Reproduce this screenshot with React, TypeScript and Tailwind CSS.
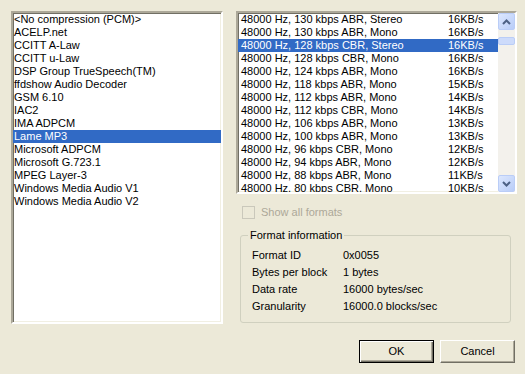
const codecs = [
  "<No compression (PCM)>",
  "ACELP.net",
  "CCITT A-Law",
  "CCITT u-Law",
  "DSP Group TrueSpeech(TM)",
  "ffdshow Audio Decoder",
  "GSM 6.10",
  "IAC2",
  "IMA ADPCM",
  "Lame MP3",
  "Microsoft ADPCM",
  "Microsoft G.723.1",
  "MPEG Layer-3",
  "Windows Media Audio V1",
  "Windows Media Audio V2",
];

const formats: [string, string][] = [
  ["48000 Hz, 130 kbps ABR, Stereo", "16KB/s"],
  ["48000 Hz, 130 kbps ABR, Mono", "16KB/s"],
  ["48000 Hz, 128 kbps CBR, Stereo", "16KB/s"],
  ["48000 Hz, 128 kbps CBR, Mono", "16KB/s"],
  ["48000 Hz, 124 kbps ABR, Mono", "16KB/s"],
  ["48000 Hz, 118 kbps ABR, Mono", "15KB/s"],
  ["48000 Hz, 112 kbps ABR, Mono", "14KB/s"],
  ["48000 Hz, 112 kbps CBR, Mono", "14KB/s"],
  ["48000 Hz, 106 kbps ABR, Mono", "13KB/s"],
  ["48000 Hz, 100 kbps ABR, Mono", "13KB/s"],
  ["48000 Hz, 96 kbps CBR, Mono", "12KB/s"],
  ["48000 Hz, 94 kbps ABR, Mono", "12KB/s"],
  ["48000 Hz, 88 kbps ABR, Mono", "11KB/s"],
  ["48000 Hz, 80 kbps CBR, Mono", "10KB/s"],
];

const info: [string, string][] = [
  ["Format ID", "0x0055"],
  ["Bytes per block", "1 bytes"],
  ["Data rate", "16000 bytes/sec"],
  ["Granularity", "16000.0 blocks/sec"],
];

const sunken =
  "border-2 border-t-[#aca899] border-l-[#aca899] border-b-white border-r-white shadow-[inset_1px_1px_0_#716f64,inset_-1px_-1px_0_#f1efe2] bg-white";

function ScrollButton({ up }: { up: boolean }) {
  return (
    <div className="w-[17px] h-[17px] rounded-[2px] border border-[#bacdf7] bg-gradient-to-br from-[#dce7fe] to-[#b9cdf8] flex items-center justify-center">
      <svg width="9" height="6" viewBox="0 0 9 6">
        <path
          d={up ? "M1 5 L4.5 1.5 L8 5" : "M1 1 L4.5 4.5 L8 1"}
          fill="none"
          stroke="#4d6185"
          strokeWidth="2"
        />
      </svg>
    </div>
  );
}

export default function App() {
  return (
    <div
      className="w-[525px] h-[374px] bg-[#ece9d8] pt-[11px] pl-[11px] text-[11px] leading-[13px] text-black flex flex-col"
      style={{ fontFamily: '"Liberation Sans", Arial, sans-serif' }}
    >
      <div className="flex">
        <div className={`${sunken} w-[212px] h-[313px] overflow-hidden`}>
          {codecs.map((c, i) => (
            <div
              key={c}
              className={`h-[13px] pl-[1px] whitespace-nowrap ${i === 9 ? "bg-[#316ac5] text-white" : ""}`}
            >
              {c}
            </div>
          ))}
        </div>

        <div className="ml-[13px] w-[281px] flex flex-col">
          <div className={`${sunken} h-[183px] flex overflow-hidden`}>
            <div className="flex-1 overflow-hidden">
              {formats.map(([f, r], i) => (
                <div
                  key={f}
                  className={`h-[13px] flex whitespace-nowrap ${i === 2 ? "bg-[#316ac5] text-white" : ""}`}
                >
                  <span className="w-[210px] pl-[3px]">{f}</span>
                  <span>{r}</span>
                </div>
              ))}
            </div>
            <div className="w-[17px] flex flex-col bg-[#f3f1ec]">
              <ScrollButton up />
              <div className="flex-1 pt-[7px]">
                <div className="h-[8px] rounded-[2px] border border-[#bacdf7] bg-[#cddbfb]" />
              </div>
              <ScrollButton up={false} />
            </div>
          </div>

          <div className="mt-[12px] ml-[6px] flex items-center gap-[6px] text-[#aca899]">
            <div className="w-[13px] h-[13px] border border-[#cac8bb] bg-[#ece9d8]" />
            <span>Show all formats</span>
          </div>

          <div className="relative mt-[16px] ml-[4px] w-[271px] h-[88px] border border-[#d0d0bf] rounded-[3px]">
            <span className="absolute -top-[7px] left-[7px] px-[2px] bg-[#ece9d8]">
              Format information
            </span>
            <div className="pt-[11px] pl-[11px] flex flex-col">
              {info.map(([k, v]) => (
                <div key={k} className="flex h-[17px] items-center">
                  <span className="w-[91px]">{k}</span>
                  <span>{v}</span>
                </div>
              ))}
            </div>
          </div>
        </div>
      </div>

      <div className="mt-[16px] mr-[10px] flex justify-end gap-[6px]">
        <button className="w-[75px] h-[23px] border border-black bg-[#ece9d8] shadow-[inset_1px_1px_0_#fff,inset_-1px_-1px_0_#716f64,inset_-2px_-2px_0_#aca899]">
          OK
        </button>
        <button className="w-[75px] h-[23px] border border-t-white border-l-white border-b-[#716f64] border-r-[#716f64] bg-[#ece9d8] shadow-[inset_-1px_-1px_0_#aca899]">
          Cancel
        </button>
      </div>
    </div>
  );
}
